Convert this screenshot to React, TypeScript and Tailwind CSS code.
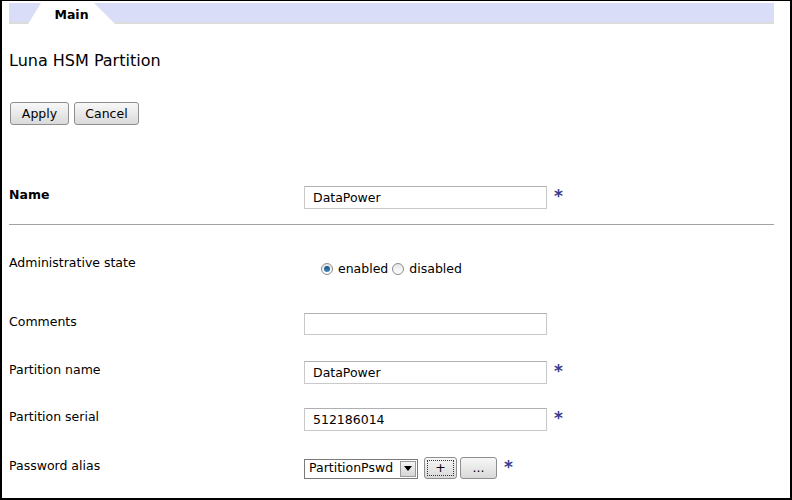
import type { ReactNode } from "react";

const font = "font-['DejaVu_Sans',Verdana,sans-serif]";

function Star() {
  return (
    <span className="ml-[7px] -mt-[2px] text-[17px] font-bold leading-none text-[#3a3a8c]">
      *
    </span>
  );
}

function TextBox({ value, h = "h-[23px]" }: { value?: string; h?: string }) {
  return (
    <div
      className={`${h} flex w-[243px] items-center border border-[#c9c9c9] border-t-[#b0b0b0] bg-white pl-[8px] pt-[1px] text-[12.5px] text-black`}
    >
      {value}
    </div>
  );
}

function Row({
  label,
  bold,
  top,
  children,
}: {
  label: string;
  bold?: boolean;
  top: string;
  children: ReactNode;
}) {
  return (
    <div className={`flex items-start ${top}`}>
      <div
        className={`w-[295px] pt-[1px] text-[12.5px] leading-[15px] text-black ${bold ? "font-bold" : ""}`}
      >
        {label}
      </div>
      <div className="flex items-center">{children}</div>
    </div>
  );
}

function Radio({ checked }: { checked?: boolean }) {
  return (
    <span className="flex h-[12px] w-[12px] items-center justify-center rounded-full border border-[#8c8c8c] bg-gradient-to-b from-[#e6e6e6] to-[#ffffff]">
      {checked && (
        <span className="h-[6px] w-[6px] rounded-full bg-gradient-to-b from-[#1a4f7a] to-[#3f8ac0]" />
      )}
    </span>
  );
}

function Btn({ children, w, dotted }: { children: ReactNode; w: string; dotted?: boolean }) {
  return (
    <div
      className={`${w} flex h-[22px] items-center justify-center rounded-[3px] border border-[#8e8e8e] bg-gradient-to-b from-[#f7f7f7] to-[#d9d9d9] p-[2px] text-[12.5px] text-black`}
    >
      <div
        className={`flex h-full w-full items-center justify-center ${dotted ? "border border-dotted border-[#333]" : ""}`}
      >
        {children}
      </div>
    </div>
  );
}

export default function App() {
  return (
    <div
      className={`${font} h-[500px] w-[792px] overflow-hidden border-t border-r-2 border-b-2 border-l-2 border-black bg-white pl-[7px] text-black`}
    >
      {/* tab strip */}
      <div className="mt-[2px] flex h-[21px] w-[765px] border-b-2 border-[#dcdcdc] bg-[#d9ddf8]">
        <div className="ml-[19px] -mb-[2px] flex h-[21px] w-[87px] items-center justify-center bg-white pt-[4px] text-[12.5px] font-bold [clip-path:polygon(13px_0,66px_0,87px_100%,0_100%)]">
          Main
        </div>
      </div>

      <div className="mt-[27px] text-[16px] leading-[19px]">Luna HSM Partition</div>

      <div className="mt-[32px] flex gap-[5px] pl-[1px]">
        <div className="flex h-[23px] w-[59px] items-center justify-center rounded-[3px] border border-[#8e8e8e] bg-gradient-to-b from-[#f8f8f8] to-[#dadada] pt-[1px] text-[12.5px]">
          Apply
        </div>
        <div className="flex h-[23px] w-[65px] items-center justify-center rounded-[3px] border border-[#8e8e8e] bg-gradient-to-b from-[#f8f8f8] to-[#dadada] pt-[1px] text-[12.5px]">
          Cancel
        </div>
      </div>

      <Row label="Name" bold top="mt-[61px]">
        <TextBox value="DataPower" />
        <Star />
      </Row>

      <div className="mt-[15px] h-px w-[765px] bg-[#a3a3a3]" />

      <Row label="Administrative state" top="mt-[29px]">
        <div className="ml-[17px] mt-[7px] flex items-center text-[12.5px] leading-[15px]">
          <Radio checked />
          <span className="ml-[5px]">enabled</span>
          <span className="ml-[4px]">
            <Radio />
          </span>
          <span className="ml-[5px]">disabled</span>
        </div>
      </Row>

      <Row label="Comments" top="mt-[37px]">
        <TextBox h="h-[22px]" />
      </Row>

      <Row label="Partition name" top="mt-[26px]">
        <TextBox value="DataPower" />
        <Star />
      </Row>

      <Row label="Partition serial" top="mt-[24px]">
        <TextBox value="512186014" />
        <Star />
      </Row>

      <Row label="Password alias" top="mt-[26px]">
        <div className="mt-[1px] flex h-[20px] w-[114px] items-center border border-[#7a7a7a] bg-white text-[12.5px]">
          <span className="flex-1 pl-[4px]">PartitionPswd</span>
          <span className="mr-[1px] flex h-[16px] w-[16px] items-center justify-center border border-[#9a9a9a] bg-gradient-to-b from-[#f4f4f4] to-[#d6d6d6]">
            <svg width="8" height="5" viewBox="0 0 8 5">
              <path d="M0 0h8L4 5z" fill="#000" />
            </svg>
          </span>
        </div>
        <div className="ml-[6px]">
          <Btn w="w-[33px]" dotted>
            +
          </Btn>
        </div>
        <div className="ml-[3px]">
          <Btn w="w-[37px]">...</Btn>
        </div>
        <Star />
      </Row>
    </div>
  );
}
